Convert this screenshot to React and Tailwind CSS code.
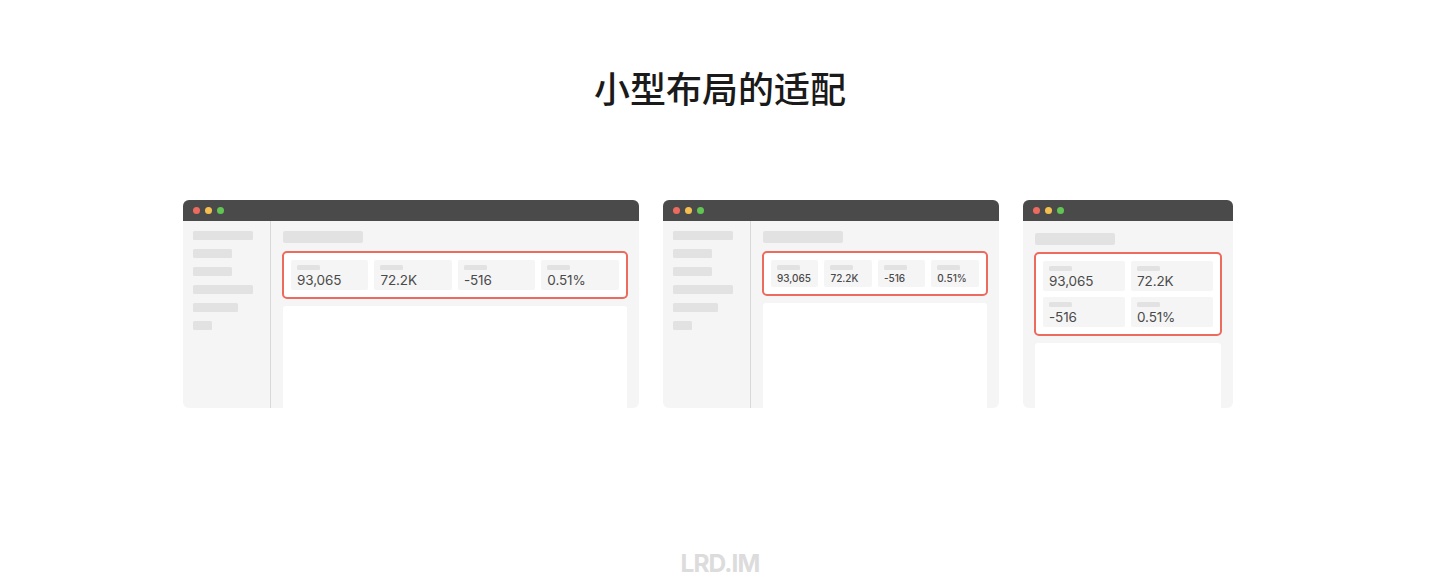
import clsx from 'clsx'

const STATS = ['93,065', '72.2K', '-516', '0.51%']

const NAV_WIDTHS = ['w-[60px]', 'w-[39px]', 'w-[39px]', 'w-[60px]', 'w-[45px]', 'w-[19px]']

function TitleBar() {
  return (
    <div className="h-[21px] shrink-0 bg-[#4a4a4a] flex items-center gap-[5px] px-2.5">
      <span className="w-[7px] h-[7px] rounded-full bg-[#ed6a5e]" />
      <span className="w-[7px] h-[7px] rounded-full bg-[#f5bf4f]" />
      <span className="w-[7px] h-[7px] rounded-full bg-[#61c554]" />
    </div>
  )
}

function Sidebar() {
  return (
    <div className="w-[88px] shrink-0 border-r border-[#d8d8d8] p-2.5 flex flex-col gap-[9px]">
      {NAV_WIDTHS.map((width, i) => (
        <div key={i} className={clsx('h-[9px] rounded-[1.5px] bg-[#e2e2e2]', width)} />
      ))}
    </div>
  )
}

function Stat({ value, small }) {
  return (
    <div className={clsx('bg-[#f5f5f5] rounded-[2px] px-1.5 pt-[5px]', small ? 'h-[27px]' : 'h-[30px]')}>
      <div className="w-[23px] h-[5px] rounded-[1.5px] bg-[#e2e2e2]" />
      <div
        className={clsx(
          'whitespace-nowrap text-[#4a4a4a]',
          small
            ? 'text-[10px] leading-[12px] mt-[2px] font-medium'
            : 'text-[13.5px] leading-[16px] mt-[2px] tracking-[-0.12px]'
        )}
      >
        {value}
      </div>
    </div>
  )
}

function Window({ className, sidebar, small, narrow }) {
  return (
    <div className={clsx('h-[208px] shrink-0 rounded-[6px] overflow-hidden bg-[#f5f5f5] flex flex-col', className)}>
      <TitleBar />
      <div className="flex flex-1 min-h-0">
        {sidebar && <Sidebar />}
        <div className={clsx('flex-1 min-w-0 px-3 flex flex-col', narrow ? 'pt-3' : 'pt-2.5')}>
          <div className="w-20 h-3 shrink-0 rounded-[2px] bg-[#e2e2e2]" />
          <div
            className={clsx(
              '-mx-px shrink-0 grid border-2 border-[#ec6a5e] rounded-[5px] bg-white p-[7px]',
              narrow ? 'mt-[7px] grid-cols-2 gap-x-[6.5px] gap-y-1.5 pr-[7.5px]' : 'mt-2 grid-cols-4 gap-1.5 pr-[7.2px]'
            )}
          >
            {STATS.map((value) => (
              <Stat key={value} value={value} small={small} />
            ))}
          </div>
          <div className="mt-[7px] flex-1 bg-white rounded-t-[3px]" />
        </div>
      </div>
    </div>
  )
}

export default function App() {
  return (
    <div className="w-[1440px] h-[588px] bg-white flex flex-col font-['Inter',sans-serif] overflow-hidden">
      <h1 className="mt-[61px] h-[53px] leading-[53px] text-center text-[36px] font-medium text-[#1a1a1a] font-['Noto_Sans_CJK_SC',sans-serif]">
        小型布局的适配
      </h1>
      <div className="mt-[86px] ml-[183px] flex gap-6">
        <Window className="w-[456px]" sidebar />
        <Window className="w-[336px]" sidebar small />
        <Window className="w-[210px]" narrow />
      </div>
      <div className="mt-auto mb-[11px] h-7 leading-7 text-center text-[24.5px] font-bold tracking-[-0.9px] text-[#dcdcdc]">
        LRD.IM
      </div>
    </div>
  )
}
